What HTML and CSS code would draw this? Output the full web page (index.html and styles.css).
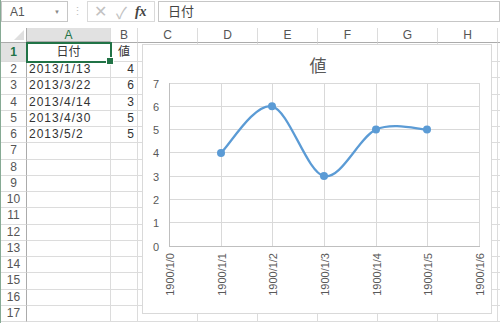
FILE: index.html
```html
<!DOCTYPE html>
<html>
<head>
	<meta charset="utf-8">
	<title>Book1 - Excel</title>
	<link rel="stylesheet" href="styles.css">
</head>
<body>
	<div class="app">
		<div class="fbar">
			<div class="namebox"><span>A1</span><span class="drop">▼</span></div>
			<div class="grip">⋮</div>
			<div class="fbtns"><span class="x">✕</span><span class="ok">✓</span><span class="fx">fx</span></div>
			<div class="finput">日付</div>
		</div>
		<div class="sheet">
			<div class="corner"></div><div class="ch cur">A</div><div class="ch">B</div><div class="ch">C</div><div class="ch">D</div><div class="ch">E</div><div class="ch">F</div><div class="ch">G</div><div class="ch">H</div><div class="ch"></div>
			<div class="rh cur">1</div><div class="c mid active">日付</div><div class="c mid">値</div><div></div><div></div><div></div><div></div><div></div><div></div><div></div>
			<div class="rh">2</div><div class="c">2013/1/13</div><div class="c num">4</div><div></div><div></div><div></div><div></div><div></div><div></div><div></div>
			<div class="rh">3</div><div class="c">2013/3/22</div><div class="c num">6</div><div></div><div></div><div></div><div></div><div></div><div></div><div></div>
			<div class="rh">4</div><div class="c">2013/4/14</div><div class="c num">3</div><div></div><div></div><div></div><div></div><div></div><div></div><div></div>
			<div class="rh">5</div><div class="c">2013/4/30</div><div class="c num">5</div><div></div><div></div><div></div><div></div><div></div><div></div><div></div>
			<div class="rh">6</div><div class="c">2013/5/2</div><div class="c num">5</div><div></div><div></div><div></div><div></div><div></div><div></div><div></div>
			<div class="rh">7</div><div></div><div></div><div></div><div></div><div></div><div></div><div></div><div></div><div></div>
			<div class="rh">8</div><div></div><div></div><div></div><div></div><div></div><div></div><div></div><div></div><div></div>
			<div class="rh">9</div><div></div><div></div><div></div><div></div><div></div><div></div><div></div><div></div><div></div>
			<div class="rh">10</div><div></div><div></div><div></div><div></div><div></div><div></div><div></div><div></div><div></div>
			<div class="rh">11</div><div></div><div></div><div></div><div></div><div></div><div></div><div></div><div></div><div></div>
			<div class="rh">12</div><div></div><div></div><div></div><div></div><div></div><div></div><div></div><div></div><div></div>
			<div class="rh">13</div><div></div><div></div><div></div><div></div><div></div><div></div><div></div><div></div><div></div>
			<div class="rh">14</div><div></div><div></div><div></div><div></div><div></div><div></div><div></div><div></div><div></div>
			<div class="rh">15</div><div></div><div></div><div></div><div></div><div></div><div></div><div></div><div></div><div></div>
			<div class="rh">16</div><div></div><div></div><div></div><div></div><div></div><div></div><div></div><div></div><div></div>
			<div class="rh">17</div><div></div><div></div><div></div><div></div><div></div><div></div><div></div><div></div><div></div>
		</div>

		<!-- グラフ（シートの上に浮いている） -->
		<div class="chart">
			<svg width="348" height="268" viewBox="143 45 348 268">
				<text class="title" x="318" y="72" text-anchor="middle">値</text>
				<path class="grid" d="M169 83.5H480M169 106.5H480M169 129.5H480M169 152.5H480M169 176.5H480M169 199.5H480M169 222.5H480M221.5 83V246M272.5 83V246M324.5 83V246M376.5 83V246M427.5 83V246M479.5 83V246"/>
				<path class="axis" d="M169.5 83V247M169 246.5H480"/>
				<g class="ylab" text-anchor="end">
					<text x="159" y="87.5">7</text>
					<text x="159" y="110.5">6</text>
					<text x="159" y="133.5">5</text>
					<text x="159" y="156.5">4</text>
					<text x="159" y="180.5">3</text>
					<text x="159" y="203.5">2</text>
					<text x="159" y="226.5">1</text>
					<text x="159" y="250.5">0</text>
				</g>
				<g class="xlab" text-anchor="end">
					<text transform="translate(173.5 253) rotate(-90)">1900/1/0</text>
					<text transform="translate(225.5 253) rotate(-90)">1900/1/1</text>
					<text transform="translate(276.5 253) rotate(-90)">1900/1/2</text>
					<text transform="translate(328.5 253) rotate(-90)">1900/1/3</text>
					<text transform="translate(380.5 253) rotate(-90)">1900/1/4</text>
					<text transform="translate(431.5 253) rotate(-90)">1900/1/5</text>
					<text transform="translate(483.5 253) rotate(-90)">1900/1/6</text>
				</g>
				<path class="line" d="M221 152.9C229.5 145.1 254.8 102.4 272 106.3C289.2 110.2 306.7 172.2 324 176.1C341.3 180 358.8 137.4 376 129.6C393.2 121.9 418.5 129.6 427 129.6"/>
				<g class="dot">
					<circle cx="221" cy="152.9" r="4"/>
					<circle cx="272" cy="106.3" r="4"/>
					<circle cx="324" cy="176.1" r="4"/>
					<circle cx="376" cy="129.6" r="4"/>
					<circle cx="427" cy="129.6" r="4"/>
				</g>
			</svg>
		</div>
	</div>
</body>
</html>
```

FILE: styles.css
```css
*{
	margin: 0px;
	padding: 0px;
	box-sizing: border-box;
}
body{
	width: 500px;
	height: 323px;
	overflow: hidden;
	background-color: white;
	font-family: "Liberation Sans", "Noto Sans CJK JP", sans-serif;
	color: #333;
}
.app{
	position: relative;
	height: 323px;
	border-left: 1px solid #86aa94;
	overflow: hidden;
}

/* 数式バー */
.fbar{
	display: flex;
	height: 28px;
	padding-top: 1px;
}
.namebox{
	display: flex;
	align-items: center;
	justify-content: space-between;
	width: 67px;
	height: 21px;
	border: 1px solid #c6c6c6;
	padding: 0 7px 0 8px;
	font-size: 12px;
	color: #555;
}
.drop{
	font-size: 6px;
	color: #888;
}
.grip{
	width: 19px;
	line-height: 21px;
	text-align: center;
	font-size: 11px;
	color: #c0c0c0;
}
.fbtns{
	display: flex;
	align-items: center;
	width: 68px;
	height: 21px;
	border: 1px solid #dadada;
	color: #c2c2c2;
	font-size: 16px;
}
.x{
	margin-left: 6px;
}
.ok{
	margin-left: 9px;
}
.fx{
	margin-left: 8px;
	font-family: "Liberation Serif", serif;
	font-style: italic;
	font-weight: bold;
	font-size: 14px;
	color: #444;
}
.finput{
	flex: 1;
	height: 21px;
	margin-left: 3px;
	border: 1px solid #c6c6c6;
	padding-left: 9px;
	font-size: 13px;
	line-height: 19px;
	color: #444;
}

/* シート */
.sheet{
	display: grid;
	grid-template-columns: 26px 84px 27px repeat(7, 60px);
	grid-template-rows: 15px 19px;
	grid-auto-rows: 16.25px;
}
.sheet>div{
	border-right: 1px solid #dcdcdc;
	border-bottom: 1px solid #dcdcdc;
	font-size: 12px;
	white-space: nowrap;
	overflow: hidden;
}
.corner{
	position: relative;
	border-bottom-color: #ababab !important;
	border-right-color: #ababab !important;
}
.corner:after{
	content: "";
	position: absolute;
	right: 2px;
	bottom: 2px;
	border-left: 10px solid transparent;
	border-bottom: 10px solid #dfdfdf;
}
.ch{
	text-align: center;
	line-height: 14px;
	color: #555;
	border-bottom-color: #ababab !important;
}
.rh{
	text-align: center;
	line-height: 15px;
	color: #555;
	border-right-color: #ababab !important;
}
.sheet>.cur{
	background-color: #e1e1e1;
	color: #217346;
}
.ch.cur{
	border-bottom: 2px solid #217346;
}
.rh.cur{
	font-weight: bold;
	line-height: 18px;
}
.c{
	padding: 0 2px;
	line-height: 15px;
	letter-spacing: 1px;
	color: #333;
}
.mid{
	text-align: center;
	line-height: 18px;
	font-size: 13px;
	letter-spacing: 0;
}
.num{
	text-align: right;
	letter-spacing: 0;
	padding-right: 3px;
}
.sheet>.active{
	position: relative;
	overflow: visible;
	outline: 2px solid #217346;
	outline-offset: -1px;
}
.active:after{
	content: "";
	position: absolute;
	right: -4px;
	bottom: -4px;
	width: 6px;
	height: 6px;
	background-color: #217346;
	border: 1px solid white;
}

/* グラフ */
.chart{
	position: absolute;
	left: 141px;
	top: 44px;
	width: 350px;
	height: 270px;
	border: 1px solid #d9d9d9;
	background-color: white;
}
.chart svg{
	display: block;
}
.title{
	font-family: "Noto Sans CJK JP", sans-serif;
	font-size: 17px;
	fill: #595959;
}
.grid{
	stroke: #d9d9d9;
	stroke-width: 1;
	fill: none;
}
.axis{
	stroke: #bfbfbf;
	stroke-width: 1;
	fill: none;
}
.ylab, .xlab{
	font-family: "Liberation Sans", sans-serif;
	font-size: 11px;
	fill: #595959;
}
.line{
	fill: none;
	stroke: #5b9bd5;
	stroke-width: 2.25;
}
.dot{
	fill: #5b9bd5;
}
```
